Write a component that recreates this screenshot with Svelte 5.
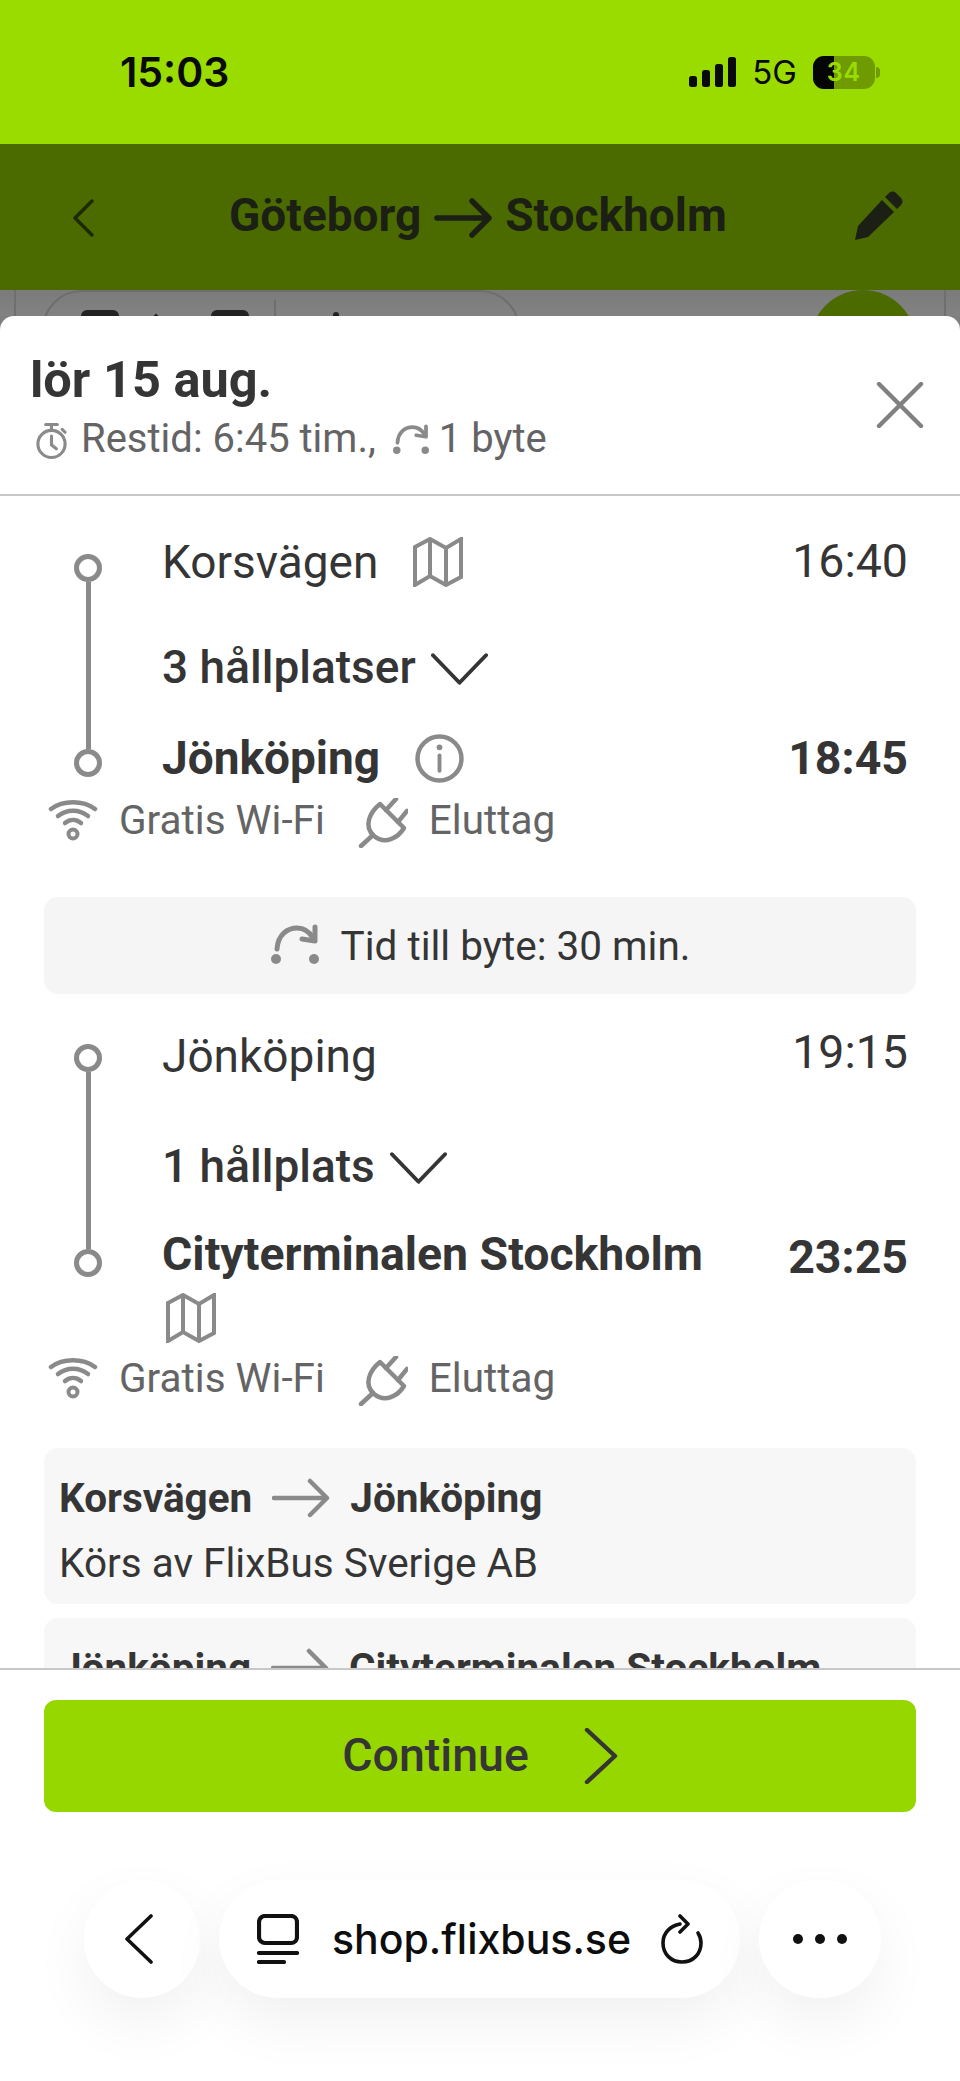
<script>
  const amenities = [
    { label: 'Gratis Wi-Fi', kind: 'wifi' },
    { label: 'Eluttag', kind: 'plug' }
  ];
</script>

{#snippet mapIcon()}
  <svg class="map" viewBox="0 0 50 50" fill="none" stroke="#8a8a8a" stroke-width="4">
    <path d="M2 10 17 2 33 11 48 2V40L33 48 17 39 2 48Z" stroke-linejoin="miter" />
    <path d="M17 2V39M33 11V48" />
  </svg>
{/snippet}

{#snippet chevron()}
  <svg class="chev" viewBox="0 0 58 32" fill="none" stroke="#353535" stroke-width="4" stroke-linecap="round" stroke-linejoin="round">
    <path d="M2 2 29 30 56 2" />
  </svg>
{/snippet}

{#snippet transfer(cls)}
  <svg class={cls} viewBox="0 0 50 40" fill="none">
    <path d="M7 25C8 10 18 4 27 4c7 0 12 3 16 10" stroke="#8a8a8a" stroke-width="5" stroke-linecap="round" />
    <path d="M45 3 45 17 32 15" stroke="#8a8a8a" stroke-width="5" stroke-linejoin="round" stroke-linecap="round" />
    <circle cx="6" cy="35" r="5" fill="#8a8a8a" />
    <circle cx="44" cy="35" r="5" fill="#8a8a8a" />
  </svg>
{/snippet}

{#snippet amenityRow()}
  <div class="amenities">
    {#each amenities as a}
      <div class="amenity {a.kind}">
        {#if a.kind === 'wifi'}
          <svg class="ic-wifi" viewBox="0 0 50 42" fill="none" stroke="#8a8a8a" stroke-width="4.5" stroke-linecap="round">
            <path d="M3 10C15 1 35 1 47 10" />
            <path d="M10 17C19 10 31 10 40 17" />
            <path d="M17 24C22 20 28 20 33 24" />
            <circle cx="25" cy="35" r="4.5" stroke-width="4" />
          </svg>
        {:else}
          <svg class="ic-plug" viewBox="0 0 50 50" fill="none" stroke="#8a8a8a" stroke-width="4.5" stroke-linecap="round" stroke-linejoin="round">
            <path d="M15 37 3 48" />
            <path d="M22 6 46 30C40 40 27 47 16 38 5 28 12 14 22 6Z" />
            <path d="M28 12 38 1M40 24 49 13" />
          </svg>
        {/if}
        <span>{a.label}</span>
      </div>
    {/each}
  </div>
{/snippet}

<div class="phone">
  <header class="status">
    <div class="clock">15:03</div>
    <div class="status-right">
      <svg class="signal" viewBox="0 0 48 30" fill="#0a0a0a">
        <rect x="0" y="19" width="8" height="11" rx="2.5" />
        <rect x="13" y="13" width="8" height="17" rx="2.5" />
        <rect x="26" y="7" width="8" height="23" rx="2.5" />
        <rect x="39" y="0" width="8" height="30" rx="2.5" />
      </svg>
      <span class="net">5G</span>
      <div class="battery">
        <div class="batt-body">
          <div class="batt-fill"></div>
          <span class="batt-num">34</span>
        </div>
        <div class="batt-cap"></div>
      </div>
    </div>
  </header>

  <nav class="topnav">
    <svg class="nav-back" viewBox="0 0 22 38" fill="none" stroke="#1d2a07" stroke-width="3.4" stroke-linecap="round" stroke-linejoin="round">
      <path d="M20 2 3 19 20 36" />
    </svg>
    <div class="nav-title">
      <span>Göteborg</span>
      <svg class="nav-arrow" viewBox="0 0 58 40" fill="none" stroke="#1b1f14" stroke-width="5.5" stroke-linecap="round" stroke-linejoin="round">
        <path d="M3 20H54M38 3 55 20 38 37" />
      </svg>
      <span>Stockholm</span>
    </div>
    <svg class="nav-edit" viewBox="0 0 50 50">
      <path d="M36 2c2-2 5-2 7 0l5 5c2 2 2 5 0 7l-4 4-12-12Z" fill="#1b1f14" />
      <path d="M29 9 41 21 15 46 2 49 5 35Z" fill="#1b1f14" />
    </svg>
  </nav>

  <div class="behind">
    <div class="behind-card">
      <div class="behind-pill">
        <div class="bh-ic"></div>
        <div class="bh-tri"></div>
        <div class="bh-ic"></div>
        <div class="bh-div"></div>
        <div class="bh-dot"></div>
      </div>
      <div class="behind-fab"></div>
    </div>
  </div>

  <section class="sheet">
    <div class="sheet-head">
      <div class="head-text">
        <h2>lör 15 aug.</h2>
        <div class="meta">
          <svg class="timer" viewBox="0 0 34 38" fill="none" stroke="#8a8a8a" stroke-width="3.2" stroke-linecap="round">
            <circle cx="17" cy="22" r="14" />
            <path d="M17 14V23L22 27M11 2H23M17 2V7M28 7 31 10" />
          </svg>
          <span>Restid: 6:45 tim.,</span>
          {@render transfer('meta-transfer')}
          <span>1 byte</span>
        </div>
      </div>
      <svg class="close" viewBox="0 0 48 46" fill="none" stroke="#808080" stroke-width="4.4" stroke-linecap="round">
        <path d="M3 2 45 44M45 2 3 44" />
      </svg>
    </div>

    <div class="scroll">
      <div class="leg leg-a">
        <div class="rail"><i></i><b></b><i></i></div>
        <div class="stops">
          <div class="stop first">
            <span class="name">Korsvägen</span>{@render mapIcon()}
            <span class="time up-a">16:40</span>
          </div>
          <div class="stopcount"><span>3 hållplatser</span>{@render chevron()}</div>
          <div class="stop last">
            <span class="name strong">Jönköping</span>
            <svg class="info" viewBox="0 0 48 48" fill="none" stroke="#8a8a8a" stroke-width="4.4">
              <circle cx="24" cy="24" r="21.5" />
              <path d="M24 21V36" stroke-width="3.8" stroke-linecap="round" />
              <circle cx="24" cy="13" r="2.8" fill="#8a8a8a" stroke="none" />
            </svg>
            <span class="time strong up-b">18:45</span>
          </div>
        </div>
      </div>
      {@render amenityRow()}

      <div class="transfer-box">
        {@render transfer('box-transfer')}
        <span>Tid till byte: 30 min.</span>
      </div>

      <div class="leg leg-b">
        <div class="rail"><i></i><b></b><i></i></div>
        <div class="stops">
          <div class="stop first">
            <span class="name">Jönköping</span>
            <span class="time up">19:15</span>
          </div>
          <div class="stopcount"><span>1 hållplats</span>{@render chevron()}</div>
          <div class="stop last multi">
            <div class="name-wrap">
              <span class="name strong city">Cityterminalen Stockholm</span>
              {@render mapIcon()}
            </div>
            <span class="time strong">23:25</span>
          </div>
        </div>
      </div>
      <div class="amen-b">{@render amenityRow()}</div>

      <div class="operator">
        <div class="route">
          <span>Korsvägen</span>
          <svg class="route-arrow" viewBox="0 0 58 40" fill="none" stroke="#8a8a8a" stroke-width="4.5" stroke-linecap="round" stroke-linejoin="round"><path d="M2 20H54M38 3 55 20 38 37" /></svg>
          <span>Jönköping</span>
        </div>
        <div class="operated">Körs av FlixBus Sverige AB</div>
      </div>
      <div class="operator second">
        <div class="route">
          <span>Jönköping</span>
          <svg class="route-arrow" viewBox="0 0 58 40" fill="none" stroke="#8a8a8a" stroke-width="4.5" stroke-linecap="round" stroke-linejoin="round"><path d="M2 20H54M38 3 55 20 38 37" /></svg>
          <span>Cityterminalen Stockholm</span>
        </div>
      </div>
    </div>

    <div class="footer">
      <button class="continue">
        <span>Continue</span>
        <svg viewBox="0 0 34 56" fill="none" stroke="#353535" stroke-width="4.4" stroke-linecap="round" stroke-linejoin="round">
          <path d="M3 2 31 28 3 54" />
        </svg>
      </button>
    </div>

    <div class="browser">
      <div class="pill round-back">
        <svg viewBox="0 0 30 50" fill="none" stroke="#111" stroke-width="3.6" stroke-linecap="round" stroke-linejoin="round">
          <path d="M27 2 3 25 27 48" />
        </svg>
      </div>
      <div class="pill url">
        <svg class="site" viewBox="0 0 42 50" fill="none" stroke="#111" stroke-width="4.2" stroke-linecap="round">
          <rect x="2" y="2" width="38" height="27" rx="6" />
          <path d="M2 39H40M2 48H27" />
        </svg>
        <span>shop.flixbus.se</span>
        <svg class="reload" viewBox="0 0 42 50" fill="none" stroke="#111" stroke-width="3.6" stroke-linecap="round" stroke-linejoin="round">
          <path d="M19 10C9 12 2 19 2 29 2 40 10 48 21 48 32 48 40 40 40 29 40 25 39 22 37 19" />
          <path d="M19 2 27 10 19 18" />
        </svg>
      </div>
      <div class="pill more"><i></i><i></i><i></i></div>
    </div>
  </section>
</div>

<style>
  :global(body) {
    margin: 0;
    background: #fff;
  }
  .phone {
    width: 960px;
    height: 2081px;
    overflow: hidden;
    font-family: Roboto, "Liberation Sans", sans-serif;
    color: #353535;
    background: #7f7f7f;
    display: flex;
    flex-direction: column;
  }

  /* status bar */
  .status {
    height: 144px;
    background: #9bdc00;
    display: flex;
    justify-content: space-between;
    align-items: center;
    padding: 0 80px 0 120px;
    box-sizing: border-box;
    flex: none;
  }
  .clock {
    font-family: Inter, sans-serif;
    font-size: 41px;
    font-weight: 600;
    color: #0a0a0a;
  }
  .status-right {
    display: flex;
    align-items: center;
  }
  .signal {
    width: 48px;
    height: 30px;
    margin-right: 15px;
  }
  .net {
    font-family: Inter, sans-serif;
    font-size: 33px;
    font-weight: 400;
    color: #0a0a0a;
    margin-right: 16px;
  }
  .battery {
    display: flex;
    align-items: center;
  }
  .batt-body {
    width: 62px;
    height: 33px;
    border-radius: 11px;
    background: #6f9a00;
    overflow: hidden;
    position: relative;
  }
  .batt-fill {
    width: 21px;
    height: 100%;
    background: #050505;
  }
  .batt-num {
    position: absolute;
    inset: 0;
    display: flex;
    align-items: center;
    justify-content: center;
    font-family: Inter, sans-serif;
    font-weight: 600;
    font-size: 25px;
    color: #9bdc00;
    letter-spacing: 1px;
  }
  .batt-cap {
    width: 4px;
    height: 11px;
    background: #6f9a00;
    border-radius: 0 4px 4px 0;
    margin-left: 1px;
  }

  /* nav */
  .topnav {
    height: 146px;
    background: #4b6b00;
    flex: none;
    display: flex;
    align-items: center;
    position: relative;
  }
  .nav-back {
    width: 22px;
    height: 38px;
    margin-left: 72px;
    margin-top: 2px;
  }
  .nav-title {
    display: flex;
    align-items: center;
    gap: 13px;
    font-size: 46px;
    font-weight: 700;
    color: #1b1f14;
    margin-left: 135px;
    margin-top: -4px;
  }
  .nav-arrow {
    width: 58px;
    height: 40px;
    margin-top: 6px;
  }
  .nav-edit {
    width: 50px;
    height: 50px;
    position: absolute;
    left: 853px;
    top: 47px;
  }

  /* page behind sheet */
  .behind {
    height: 26px;
    flex: none;
    background: linear-gradient(#7b7b7b, #828282);
    overflow: hidden;
  }
  .behind-card {
    margin: 0 14px;
    height: 100%;
    box-sizing: border-box;
    border-left: 2px solid #6f6f6f;
    border-right: 2px solid #6f6f6f;
    display: flex;
    justify-content: space-between;
    padding: 0 28px 0 26px;
  }
  .behind-pill {
    width: 478px;
    height: 80px;
    flex: none;
    box-sizing: border-box;
    border: 2px solid #6e6e6e;
    border-radius: 40px;
    display: flex;
    align-items: flex-start;
    padding: 18px 0 0 37px;
  }
  .bh-ic {
    width: 38px;
    height: 30px;
    flex: none;
    border-radius: 6px;
    background: #222;
  }
  .bh-tri {
    width: 12px;
    height: 12px;
    flex: none;
    background: #222;
    transform: rotate(45deg);
    margin: 6px 49px 0 31px;
  }
  .bh-div {
    width: 2px;
    height: 40px;
    flex: none;
    margin: -10px 0 0 25px;
    background: #6e6e6e;
  }
  .bh-dot {
    width: 6px;
    height: 6px;
    flex: none;
    border-radius: 50%;
    background: #222;
    margin: 2px 0 0 57px;
  }
  .behind-fab {
    width: 106px;
    height: 106px;
    flex: none;
    border-radius: 50%;
    background: #4b6b00;
  }

  /* sheet */
  .sheet {
    background: #fff;
    border-radius: 14px 14px 0 0;
    flex: 1;
    display: flex;
    flex-direction: column;
    min-height: 0;
  }
  .sheet-head {
    height: 180px;
    flex: none;
    box-sizing: border-box;
    border-bottom: 2px solid #c8c8c8;
    padding: 32px 36px 0 30px;
    display: flex;
    justify-content: space-between;
    align-items: flex-start;
  }
  h2 {
    margin: 0;
    font-size: 50.5px;
    line-height: 64px;
    font-weight: 700;
    color: #353535;
  }
  .meta {
    display: flex;
    align-items: center;
    font-size: 40px;
    line-height: 46px;
    color: #646464;
    margin-left: 5px;
    margin-top: 4px;
  }
  .timer {
    width: 33px;
    height: 38px;
    margin: 4px 13px 0 0;
  }
  .meta-transfer {
    width: 40px;
    height: 30px;
    margin: 0 8px 0 15px;
  }
  .close {
    width: 48px;
    height: 46px;
    margin-top: 34px;
  }

  .scroll {
    height: 1174px;
    flex: none;
    overflow: hidden;
    box-sizing: border-box;
    border-bottom: 2px solid #c8c8c8;
  }
  .leg {
    display: flex;
    align-items: flex-start;
    padding-left: 74px;
  }
  .leg-a { margin-top: 41px; }
  .leg-b { margin-top: 36px; }
  .rail {
    width: 28px;
    flex: none;
    display: flex;
    flex-direction: column;
    align-items: center;
  }
  .leg-a .rail {
    margin-top: 17px;
    height: 223px;
  }
  .leg-b .rail {
    margin-top: 14px;
    height: 233px;
  }
  .rail i {
    width: 28px;
    height: 28px;
    box-sizing: border-box;
    border: 5px solid #8a8a8a;
    border-radius: 50%;
    background: #fff;
    flex: none;
  }
  .rail b {
    width: 5px;
    flex: 1;
    background: #8a8a8a;
  }
  .stops {
    flex: 1;
    padding: 0 52px 0 60px;
    min-width: 0;
  }
  .stop {
    display: flex;
    align-items: center;
    position: relative;
  }
  .name, .time {
    font-size: 46px;
    line-height: 52px;
    color: #353535;
  }
  .time {
    font-size: 46.5px;
    margin-left: auto;
  }
  .strong { font-weight: 700; }
  .name.city { font-size: 46.4px; }
  .map {
    width: 50px;
    height: 50px;
    margin-left: 35px;
    flex: none;
  }
  .first { height: 50px; }
  .stopcount {
    display: flex;
    align-items: center;
    font-size: 46px;
    font-weight: 500;
    height: 52px;
    margin-top: 54px;
    color: #353535;
  }
  .chev {
    width: 57px;
    height: 32px;
    margin-left: 15px;
    margin-top: 4px;
  }
  .leg-a .last {
    margin-top: 39px;
    height: 52px;
  }
  .info {
    width: 49px;
    height: 49px;
    margin-left: 35px;
  }
  .up-a { margin-top: -3px; }
  .up-b { margin-top: -1px; }
  .up { margin-top: -8px; }
  .leg-b .first { height: 52px; }
  .leg-b .stopcount { margin-top: 58px; }
  .leg-b .multi {
    margin-top: 36px;
    align-items: flex-start;
  }
  .name-wrap {
    display: flex;
    flex-direction: column;
    align-items: flex-start;
  }
  .name-wrap .map {
    margin: 13px 0 0 4px;
  }
  .multi .time { margin-top: 3px; }

  .amenities {
    display: flex;
    align-items: center;
    margin-top: 11px;
    padding-left: 48px;
    height: 50px;
    font-size: 40.5px;
    color: #646464;
  }
  .amenity {
    display: flex;
    align-items: center;
  }
  .ic-wifi {
    width: 50px;
    height: 42px;
    margin-right: 21px;
    flex: none;
  }
  .ic-plug {
    width: 50px;
    height: 50px;
    margin: 6px 21px 0 33px;
    flex: none;
  }
  .amen-b .amenities { margin-top: 10px; }

  .transfer-box {
    margin: 52px 44px 0;
    height: 97px;
    border-radius: 14px;
    background: #f5f5f5;
    display: flex;
    align-items: center;
    justify-content: center;
    gap: 21px;
    font-size: 40.5px;
    color: #353535;
  }
  .box-transfer {
    width: 50px;
    height: 40px;
    flex: none;
    margin-bottom: 4px;
  }

  .operator {
    margin: 45px 44px 0;
    height: 156px;
    border-radius: 14px;
    background: #f7f7f7;
    box-sizing: border-box;
    padding: 26px 15px 0;
    font-size: 40.5px;
    color: #353535;
  }
  .operator.second {
    margin-top: 14px;
    height: 120px;
  }
  .route {
    display: flex;
    align-items: center;
    font-weight: 700;
    line-height: 48px;
  }
  .route-arrow {
    width: 58px;
    height: 40px;
    margin: 0 20px;
  }
  .operated {
    line-height: 48px;
    margin-top: 17px;
  }

  .footer {
    flex: none;
    padding: 30px 44px 0;
  }
  .continue {
    width: 100%;
    height: 112px;
    border: none;
    border-radius: 12px;
    background: #97d700;
    display: flex;
    align-items: center;
    justify-content: center;
    gap: 55px;
    font: inherit;
    font-size: 46.5px;
    font-weight: 500;
    color: #353535;
    padding: 0;
    margin: 0;
  }
  .continue span {
    margin-bottom: 3px;
  }
  .continue svg {
    width: 34px;
    height: 56px;
    margin-bottom: 1px;
  }

  .browser {
    flex: none;
    margin-top: 68px;
    height: 118px;
    padding-left: 84px;
    display: flex;
    gap: 19px;
  }
  .pill {
    height: 118px;
    background: #fff;
    border-radius: 59px;
    box-shadow: 0 24px 60px rgba(0, 0, 0, 0.06);
    display: flex;
    align-items: center;
    box-sizing: border-box;
  }
  .round-back {
    width: 116px;
    justify-content: center;
  }
  .round-back svg {
    width: 30px;
    height: 50px;
    margin-left: -6px;
  }
  .url {
    width: 521px;
    padding-left: 38px;
  }
  .site {
    width: 42px;
    height: 50px;
    flex: none;
  }
  .url span {
    font-family: Inter, sans-serif;
    font-size: 41px;
    font-weight: 500;
    color: #0d0d0d;
    margin-left: 33px;
    white-space: nowrap;
  }
  .reload {
    width: 42px;
    height: 50px;
    margin-left: 30px;
    flex: none;
  }
  .more {
    width: 122px;
    justify-content: center;
    gap: 12px;
  }
  .more i {
    width: 10px;
    height: 10px;
    border-radius: 50%;
    background: #111;
  }
</style>
